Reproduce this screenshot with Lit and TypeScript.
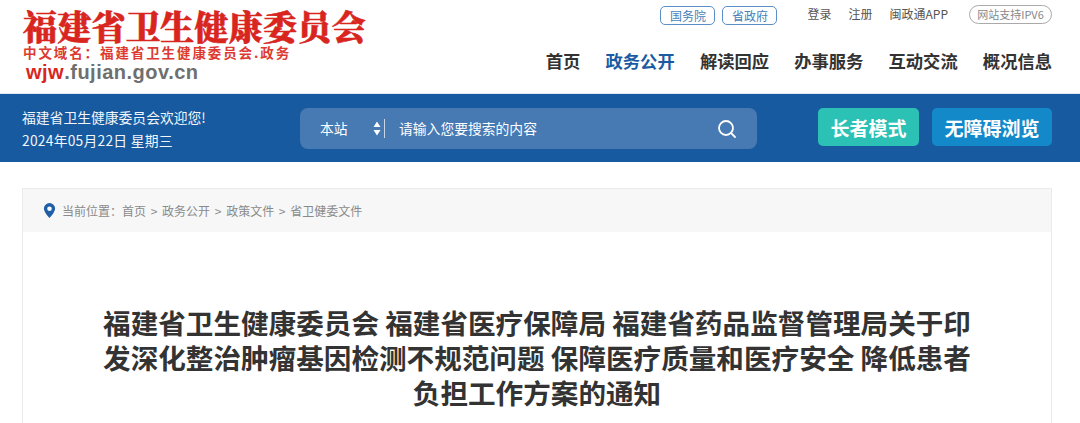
import { LitElement, html, css } from "lit";
import { customElement } from "lit/decorators.js";

@customElement("app-root")
export class AppRoot extends LitElement {
  static styles = css`
    :host { display: block; width: 1080px; height: 423px; overflow: hidden; background: #fff;
      font-family: "Noto Sans CJK SC", "Liberation Sans", sans-serif; }
    * { box-sizing: border-box; }
    .header { height: 93px; display: flex; justify-content: space-between; padding: 0 28px 0 23px; }
    .logo { display: flex; flex-direction: column; padding-top: 7px; }
    .logo-name { font-family: "Noto Serif CJK SC", "Noto Sans CJK SC", serif; font-size: 34px; line-height: 38px; font-weight: 900; color: #d8261f; letter-spacing: 0.3px; white-space: nowrap; -webkit-text-stroke: 0.6px #d8261f; }
    .logo-cn { font-size: 13.5px; line-height: 15px; font-weight: 700; color: #dc3a32; letter-spacing: 1.9px; white-space: nowrap; margin-top: 0; }
    .logo-url { font-family: "Liberation Sans", sans-serif; font-size: 20px; line-height: 24px; font-weight: 700; color: #6f6f6f; letter-spacing: 0.5px; margin: 0 0 0 3px; }
    .logo-url b { color: #d8261f; }
    .right { display: flex; flex-direction: column; align-items: flex-end; }
    .top { display: flex; align-items: center; height: 20px; margin-top: 5px; font-size: 12px; color: #555; }
    .tag { width: 55px; height: 19px; border: 1px solid #5b8fc6; border-radius: 5px; color: #4a7fb8; display: flex; align-items: center; justify-content: center; margin-right: 7px; }
    .tag.last { margin-right: 30px; }
    .link { margin-right: 17px; margin-bottom: 3px; }
    .link.last { margin-right: 21px; }
    .pill { width: 83px; height: 19px; margin-bottom: 2px; border: 1px solid #aaa; border-radius: 10px; color: #888; font-size: 11px; display: flex; align-items: center; justify-content: center; white-space: nowrap; }
    .nav { display: flex; gap: 25.2px; margin-top: 23px; font-size: 17.3px; line-height: 25px; font-weight: 700; color: #333; }
    .nav .active { color: #1a5ba3; }
    .band { height: 69px; background: #175a9f; border-top: 1px solid #dfe8f1; display: flex; align-items: flex-start; padding: 14px 28px 0 22px; color: #fff; }
    .welcome { width: 278px; font-size: 13.8px; line-height: 23px; margin-top: -2px; color: #f2f6fa; }
    .date { letter-spacing: 0.25px; }
    .search { width: 457px; height: 41px; background: #4779b3; border-radius: 8px; display: flex; align-items: center; font-size: 13.8px; color: #fff; padding: 0 20px; }
    .scope { width: 53px; padding-bottom: 2px; }
    .updown { width: 8px; height: 15px; margin-right: 3px; display: block; }
    .sep { width: 1px; height: 19px; background: #c8d7e8; margin-right: 14px; }
    .ph { flex: 1; padding-bottom: 2px; }
    .mag { width: 20px; height: 20px; display: block; }
    .btn { height: 38px; border-radius: 5px; display: flex; align-items: center; justify-content: center; font-size: 19px; font-weight: 700; color: #fff; white-space: nowrap; }
    .b1 { width: 101px; background: #2cc1b5; margin-left: 61px; }
    .b2 { width: 120px; background: #1489c9; margin-left: 13px; }
    .card { margin: 26px 28px 0 22px; width: 1030px; height: 300px; border: 1px solid #ebebeb; border-bottom: none; }
    .crumb { height: 43px; background: #f7f7f7; display: flex; align-items: center; padding-left: 20px; font-size: 12px; color: #8a8a8a; }
    .pin { width: 13px; height: 15px; margin-right: 6px; display: block; }
    .crumb i { font-style: normal; margin: 0 4.7px; }
    h1 { margin: 0 0 0 73px; padding: 73px 0 0; width: 882px; text-align: center; font-size: 27.6px; line-height: 35px; font-weight: 700; color: #333; }
  `;

  render() {
    return html`
      <div class="header">
        <div class="logo">
          <div class="logo-name">福建省卫生健康委员会</div>
          <div class="logo-cn">中文域名：福建省卫生健康委员会.政务</div>
          <div class="logo-url"><b>wjw</b>.fujian.gov.cn</div>
        </div>
        <div class="right">
          <div class="top">
            <span class="tag">国务院</span>
            <span class="tag last">省政府</span>
            <span class="link">登录</span>
            <span class="link">注册</span>
            <span class="link last">闽政通APP</span>
            <span class="pill">网站支持IPV6</span>
          </div>
          <div class="nav">
            <span>首页</span>
            <span class="active">政务公开</span>
            <span>解读回应</span>
            <span>办事服务</span>
            <span>互动交流</span>
            <span>概况信息</span>
          </div>
        </div>
      </div>
      <div class="band">
        <div class="welcome">福建省卫生健康委员会欢迎您!<br /><span class="date">2024年05月22日 星期三</span></div>
        <div class="search">
          <span class="scope">本站</span>
          <svg class="updown" viewBox="0 0 8 15"><path d="M4 0.5L7.5 6H0.5zM4 14.5L0.5 9H7.5z" fill="#fff" /></svg>
          <span class="sep"></span>
          <span class="ph">请输入您要搜索的内容</span>
          <svg class="mag" viewBox="0 0 20 20" fill="none" stroke="#fff" stroke-width="1.8" stroke-linecap="round"><circle cx="9" cy="9" r="7" /><path d="M14.2 14.2L18 18" /></svg>
        </div>
        <div class="btn b1">长者模式</div>
        <div class="btn b2">无障碍浏览</div>
      </div>
      <div class="card">
        <div class="crumb">
          <svg class="pin" viewBox="0 0 13 15"><path fill-rule="evenodd" d="M6.5 0a5.6 5.6 0 0 1 5.6 5.6C12.1 9.4 6.5 15 6.5 15S.9 9.4.9 5.6A5.6 5.6 0 0 1 6.5 0zm0 3.4a2.3 2.3 0 1 0 0 4.6 2.3 2.3 0 0 0 0-4.6z" fill="#1f5fa6" /></svg>
          当前位置：首页<i>&gt;</i>政务公开<i>&gt;</i>政策文件<i>&gt;</i>省卫健委文件
        </div>
        <h1>福建省卫生健康委员会 福建省医疗保障局 福建省药品监督管理局关于印发深化整治肿瘤基因检测不规范问题 保障医疗质量和医疗安全 降低患者负担工作方案的通知</h1>
      </div>
    `;
  }
}
